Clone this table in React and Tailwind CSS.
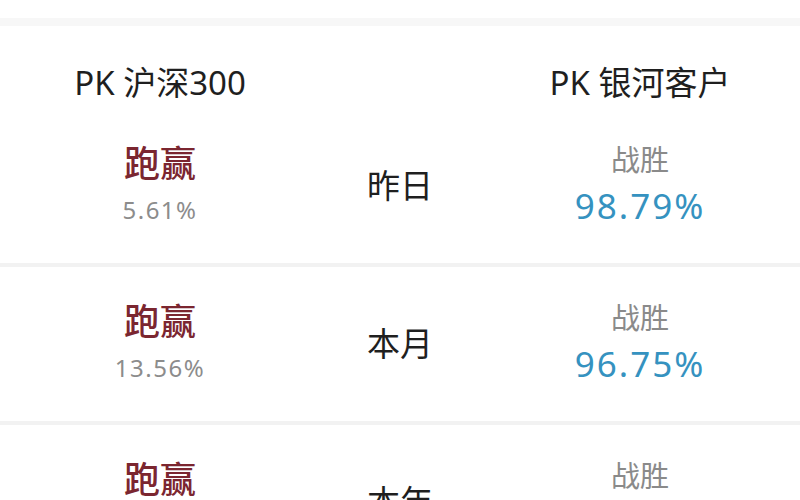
const FONT = "font-['Noto_Sans','Noto_Sans_CJK_SC',sans-serif]";

const rows = [
  { period: "昨日", beat: "5.61%", win: "98.79%" },
  { period: "本月", beat: "13.56%", win: "96.75%" },
  { period: "本年", beat: "21.08%", win: "95.12%" },
];

function Row({ period, beat, win }) {
  return (
    <div className="grid grid-cols-[320px_160px_320px] h-[154px] items-center">
      <div className="flex flex-col items-center pt-[4px]">
        <span className="text-[36px] leading-[44px] font-medium text-[#7b2630]">跑赢</span>
        <span className="text-[24px] leading-[48px] tracking-[1.5px] text-[#8c8c8c]">{beat}</span>
      </div>
      <div className="flex justify-center">
        <span className="text-[33px] leading-[40px] text-[#1f1f1f]">{period}</span>
      </div>
      <div className="flex flex-col items-center">
        <span className="text-[29px] leading-[40px] text-[#8a8a8a]">战胜</span>
        <span className="text-[35px] leading-[52px] tracking-[2px] text-[#3592c0]">{win}</span>
      </div>
    </div>
  );
}

export default function App() {
  return (
    <div className={`w-[800px] h-[500px] overflow-hidden bg-white ${FONT}`}>
      <div className="h-[18px]" />
      <div className="h-[8px] bg-[#f7f7f7]" />
      <div className="grid grid-cols-[320px_160px_320px] h-[83px] pt-[37px]">
        <div className="flex justify-center">
          <span className="text-[33px] leading-[40px] text-[#1f1f1f]">PK 沪深300</span>
        </div>
        <div />
        <div className="flex justify-center">
          <span className="text-[33px] leading-[40px] text-[#1f1f1f]">PK 银河客户</span>
        </div>
      </div>
      {rows.map((r, i) => (
        <div key={r.period}>
          {i > 0 && <div className="h-[4px] bg-[#f2f2f2]" />}
          <Row {...r} />
        </div>
      ))}
    </div>
  );
}
